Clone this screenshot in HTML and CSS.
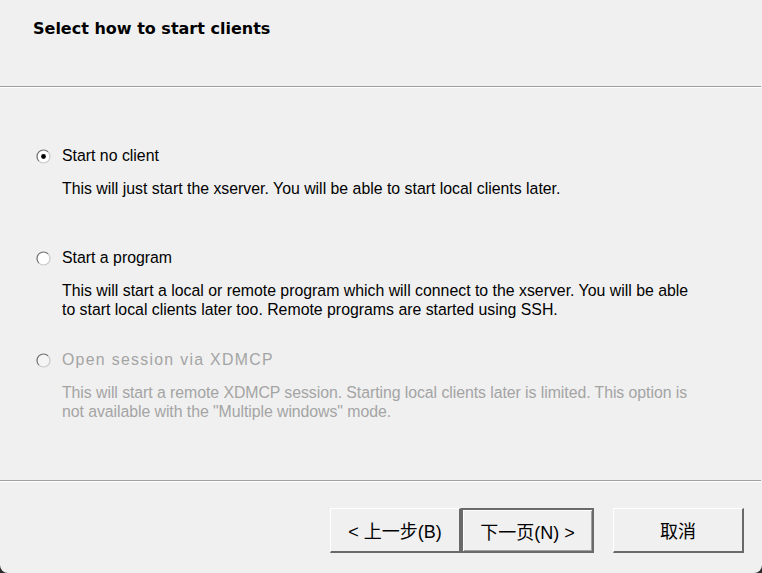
FILE: index.html
```html
<!DOCTYPE html>
<html>
<head>
<meta charset="utf-8">
<link rel="stylesheet" href="styles.css">
</head>
<body>
<div class="window">
  <header class="head">
    <h1 class="title">Select how to start clients</h1>
  </header>
  <div class="sep"></div>
  <main class="options">
    <div class="option">
      <div class="radio-row">
        <svg class="radio" width="15" height="15" viewBox="0 0 15 15">
          <circle cx="7.5" cy="7.5" r="6.5" fill="#fff"/>
          <path d="M2.9 12.1 A6.5 6.5 0 0 1 12.1 2.9" fill="none" stroke="#6e6e6e" stroke-width="1.2"/>
          <path d="M12.1 2.9 A6.5 6.5 0 0 1 2.9 12.1" fill="none" stroke="#c8c8c8" stroke-width="1.2"/>
          <circle cx="7.5" cy="7.5" r="2.4" fill="#000"/>
        </svg>
        <span class="label">Start no client</span>
      </div>
      <p class="desc">This will just start the xserver. You will be able to start local clients later.</p>
    </div>
    <div class="option">
      <div class="radio-row">
        <svg class="radio" width="15" height="15" viewBox="0 0 15 15">
          <circle cx="7.5" cy="7.5" r="6.5" fill="#fff"/>
          <path d="M2.9 12.1 A6.5 6.5 0 0 1 12.1 2.9" fill="none" stroke="#6e6e6e" stroke-width="1.2"/>
          <path d="M12.1 2.9 A6.5 6.5 0 0 1 2.9 12.1" fill="none" stroke="#c8c8c8" stroke-width="1.2"/>
        </svg>
        <span class="label">Start a program</span>
      </div>
      <p class="desc">This will start a local or remote program which will connect to the xserver. You will be able<br>to start local clients later too. Remote programs are started using SSH.</p>
    </div>
    <div class="option disabled">
      <div class="radio-row">
        <svg class="radio" width="15" height="15" viewBox="0 0 15 15">
          <circle cx="7.5" cy="7.5" r="6.5" fill="#f4f4f4"/>
          <path d="M2.9 12.1 A6.5 6.5 0 0 1 12.1 2.9" fill="none" stroke="#6e6e6e" stroke-width="1.2"/>
          <path d="M12.1 2.9 A6.5 6.5 0 0 1 2.9 12.1" fill="none" stroke="#c8c8c8" stroke-width="1.2"/>
        </svg>
        <span class="label">Open session via XDMCP</span>
      </div>
      <p class="desc">This will start a remote XDMCP session. Starting local clients later is limited. This option is<br>not available with the "Multiple windows" mode.</p>
    </div>
  </main>
  <div class="sep"></div>
  <footer class="buttons">
    <div class="nav">
      <button class="btn">&lt; 上一步(B)</button>
      <button class="btn default">下一页(N) &gt;</button>
    </div>
    <button class="btn">取消</button>
  </footer>
</div>
</body>
</html>
```

FILE: styles.css
```css
html, body {
  margin: 0;
  padding: 0;
  background: #2b2b2b;
}
body {
  width: 762px;
  height: 573px;
  overflow: hidden;
}
.window {
  width: 762px;
  height: 573px;
  background: #f0f0f0;
  border-radius: 0 0 8px 8px;
  display: flex;
  flex-direction: column;
  font-family: "Liberation Sans", Arial, "Noto Sans CJK SC", sans-serif;
  font-size: 15.85px;
  color: #000;
}
.head {
  height: 86px;
  box-sizing: border-box;
  padding: 19px 0 0 33px;
}
.title {
  margin: 0;
  font-family: "DejaVu Sans", "Liberation Sans", sans-serif;
  font-weight: bold;
  font-size: 16px;
  line-height: 20px;
}
.sep {
  height: 1px;
  border-bottom: 1px solid #fff;
  background: #a0a0a0;
  margin-right: 1px;
}
.options {
  height: 392px;
  box-sizing: border-box;
  padding: 58px 0 0 36px;
  display: flex;
  flex-direction: column;
}
.option {
  height: 102px;
  display: flex;
  flex-direction: column;
  gap: 13px;
}
.radio-row {
  display: flex;
  align-items: center;
  gap: 11px;
  height: 20px;
}
.radio {
  display: block;
  flex: none;
}
.label {
  line-height: 20px;
}
.desc {
  margin: 0 0 0 26px;
  line-height: 19px;
}
.disabled .label, .disabled .desc {
  color: #a4a4a4;
}
.disabled .label {
  letter-spacing: 1.3px;
}
.disabled .desc {
  letter-spacing: -0.06px;
}
.buttons {
  flex: 1;
  display: flex;
  align-items: flex-start;
  padding: 26px 0 0 330px;
  gap: 19px;
}
.nav {
  display: flex;
}
.btn {
  font-family: "Liberation Sans", Arial, "Noto Sans CJK SC", sans-serif;
  font-size: 18px;
  color: #000;
  background: #f0f0f0;
  height: 45px;
  width: 131px;
  box-sizing: border-box;
  padding: 0;
  margin: 0;
  border-style: solid;
  border-width: 1px 2px 2px 1px;
  border-color: #fff #696969 #696969 #fff;
  border-radius: 0;
  outline: none;
}
.btn.default {
  width: 133px;
  border-width: 2px;
  border-color: #6a6a6a;
  box-shadow: inset 1px 1px 0 #fff, inset -1px -1px 0 #a0a0a0;
}
```
